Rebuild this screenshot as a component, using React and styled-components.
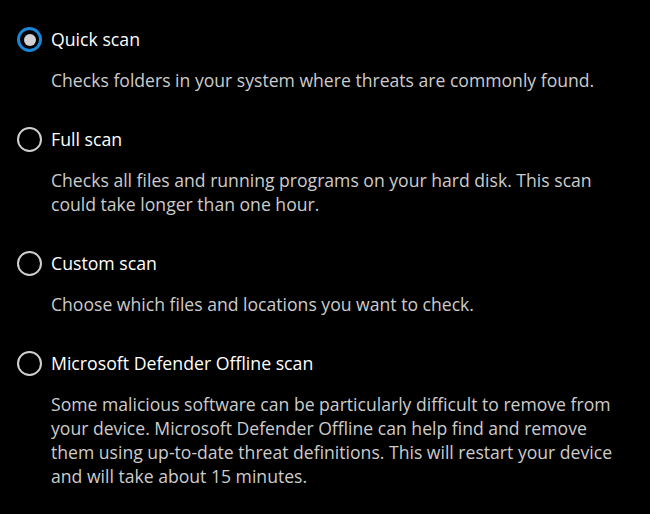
import React, { useState } from "react";
import styled, { createGlobalStyle } from "styled-components";

const Global = createGlobalStyle`
  html, body { margin: 0; padding: 0; background: #000; }
  body { font-family: "Open Sans", "Noto Sans", sans-serif; -webkit-font-smoothing: antialiased; }
`;

const Page = styled.div`
  width: 650px;
  height: 514px;
  box-sizing: border-box;
  background: #000;
  padding: 27px 0 0 17px;
  display: flex;
  flex-direction: column;
  gap: 35px;
  overflow: hidden;
`;

const Option = styled.div`
  display: flex;
  flex-direction: column;
  gap: 17px;
`;

const Label = styled.label`
  display: flex;
  align-items: center;
  gap: 9px;
  cursor: pointer;
  color: #ffffff;
  font-size: 17.7px;
  line-height: 24px;
  height: 24px;
`;

const Radio = styled.span`
  box-sizing: border-box;
  width: 25px;
  height: 25px;
  border-radius: 50%;
  flex: none;
  display: flex;
  align-items: center;
  justify-content: center;
  margin-top: 1px;
  border: ${(p) => (p.$checked ? "3px solid #1a86d6" : "2px solid #cfcfcf")};
  &::after {
    content: "";
    display: ${(p) => (p.$checked ? "block" : "none")};
    width: 12px;
    height: 12px;
    border-radius: 50%;
    background: #d2d2d2;
  }
`;

const Description = styled.p`
  margin: 0 0 0 34px;
  color: #cccccc;
  font-size: 17.6px;
  line-height: 24px;
  white-space: nowrap;
`;

const options = [
  { id: "quick", title: "Quick scan", lines: ["Checks folders in your system where threats are commonly found."] },
  {
    id: "full",
    title: "Full scan",
    lines: [
      "Checks all files and running programs on your hard disk. This scan",
      "could take longer than one hour.",
    ],
  },
  { id: "custom", title: "Custom scan", lines: ["Choose which files and locations you want to check."] },
  {
    id: "offline",
    title: "Microsoft Defender Offline scan",
    lines: [
      "Some malicious software can be particularly difficult to remove from",
      "your device. Microsoft Defender Offline can help find and remove",
      "them using up-to-date threat definitions. This will restart your device",
      "and will take about 15 minutes.",
    ],
  },
];

export default function App() {
  const [selected, setSelected] = useState("quick");
  return (
    <>
      <Global />
      <Page>
        {options.map((o) => (
          <Option key={o.id}>
            <Label onClick={() => setSelected(o.id)}>
              <Radio $checked={selected === o.id} />
              {o.title}
            </Label>
            <Description>
              {o.lines.map((l, i) => (
                <React.Fragment key={i}>
                  {i > 0 && <br />}
                  {l}
                </React.Fragment>
              ))}
            </Description>
          </Option>
        ))}
      </Page>
    </>
  );
}
